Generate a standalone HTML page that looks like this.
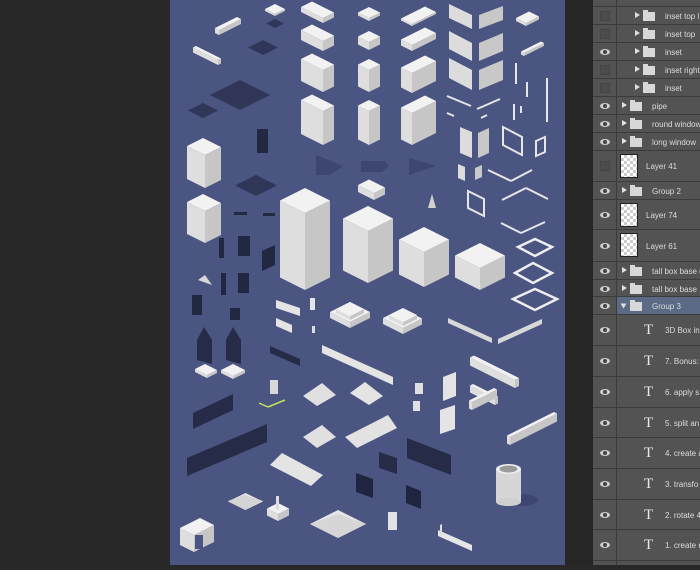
<!DOCTYPE html>
<html><head><meta charset="utf-8"><style>
*{margin:0;padding:0;box-sizing:border-box}
body{width:700px;height:565px;overflow:hidden;background:#282828;position:relative;font-family:"Liberation Sans",sans-serif}
#left{position:absolute;left:0;top:0;width:170px;height:565px;background:#282828}
#cv{position:absolute;left:170px;top:0;width:395px;height:565px;background:#4a5582}
#strip{position:absolute;left:565px;top:0;width:28px;height:565px;background:#262626}
#panel{position:absolute;left:593px;top:0;width:107px;height:565px;background:#535353;overflow:hidden}
.row{position:absolute;left:0;width:107px;border-bottom:1px solid #3b3b3b;color:#dcdcdc;font-size:8px;white-space:nowrap}
.row .eyec{position:absolute;left:0;top:0;bottom:0;width:24px;border-right:1px solid #3b3b3b}
.eye{position:absolute;left:7px;width:10px;height:6px;border-radius:50%;background:#cfcfcf}
.eye:after{content:"";position:absolute;left:3px;top:1px;width:4px;height:4px;border-radius:50%;background:#444}
.box{position:absolute;left:7px;width:10px;height:10px;border:1px solid #444;background:#4c4c4c}
.tri{position:absolute;width:0;height:0;border-left:5px solid #e0e0e0;border-top:3.5px solid transparent;border-bottom:3.5px solid transparent}
.fold{position:absolute;width:12px;height:9px;background:#d8d8d8}
.fold:before{content:"";position:absolute;left:0;top:-2px;width:5px;height:2px;background:#d8d8d8}
.thumb{position:absolute;left:27px;width:18px;height:24px;border:1px solid #222;background-color:#fff;background-image:linear-gradient(45deg,#ccc 25%,transparent 25%,transparent 75%,#ccc 75%),linear-gradient(45deg,#ccc 25%,transparent 25%,transparent 75%,#ccc 75%);background-size:6px 6px;background-position:0 0,3px 3px}
.T{position:absolute;left:51px;font-family:"Liberation Serif",serif;font-size:15px;color:#e8e8e8}
.lbl{position:absolute}
</style></head><body>
<div id="left"></div>
<div id="cv"><svg id="s" width="395" height="565" viewBox="170 0 395 565" xmlns="http://www.w3.org/2000/svg"></svg></div>
<div id="strip"></div>
<div id="panel">
<div class="row" style="top:0;height:7px;"><div class="eyec"></div></div>
<div class="row" style="top:7px;height:18px"><div class="eyec"><div class="box" style="top:4px"></div></div><div class="tri" style="left:42px;top:5px"></div><div class="fold" style="left:50px;top:5px"></div><div class="lbl" style="left:72px;top:5px">inset top l</div></div>
<div class="row" style="top:25px;height:18px"><div class="eyec"><div class="box" style="top:4px"></div></div><div class="tri" style="left:42px;top:5px"></div><div class="fold" style="left:50px;top:5px"></div><div class="lbl" style="left:72px;top:5px">inset top</div></div>
<div class="row" style="top:43px;height:18px"><div class="eyec"><div class="eye" style="top:6px"></div></div><div class="tri" style="left:42px;top:5px"></div><div class="fold" style="left:50px;top:5px"></div><div class="lbl" style="left:72px;top:5px">inset</div></div>
<div class="row" style="top:61px;height:18px"><div class="eyec"><div class="box" style="top:4px"></div></div><div class="tri" style="left:42px;top:5px"></div><div class="fold" style="left:50px;top:5px"></div><div class="lbl" style="left:72px;top:5px">inset right</div></div>
<div class="row" style="top:79px;height:18px"><div class="eyec"><div class="box" style="top:4px"></div></div><div class="tri" style="left:42px;top:5px"></div><div class="fold" style="left:50px;top:5px"></div><div class="lbl" style="left:72px;top:5px">inset</div></div>
<div class="row" style="top:97px;height:18px"><div class="eyec"><div class="eye" style="top:6px"></div></div><div class="tri" style="left:29px;top:5px"></div><div class="fold" style="left:37px;top:5px"></div><div class="lbl" style="left:59px;top:5px">pipe</div></div>
<div class="row" style="top:115px;height:18px"><div class="eyec"><div class="eye" style="top:6px"></div></div><div class="tri" style="left:29px;top:5px"></div><div class="fold" style="left:37px;top:5px"></div><div class="lbl" style="left:59px;top:5px">round window</div></div>
<div class="row" style="top:133px;height:18px"><div class="eyec"><div class="eye" style="top:6px"></div></div><div class="tri" style="left:29px;top:5px"></div><div class="fold" style="left:37px;top:5px"></div><div class="lbl" style="left:59px;top:5px">long window</div></div>
<div class="row" style="top:151px;height:31px"><div class="eyec"><div class="box" style="top:10px"></div></div><div class="thumb" style="top:3px"></div><div class="lbl" style="left:53px;top:11px">Layer 41</div></div>
<div class="row" style="top:182px;height:18px"><div class="eyec"><div class="eye" style="top:6px"></div></div><div class="tri" style="left:29px;top:5px"></div><div class="fold" style="left:37px;top:5px"></div><div class="lbl" style="left:59px;top:5px">Group 2</div></div>
<div class="row" style="top:200px;height:30px"><div class="eyec"><div class="eye" style="top:12px"></div></div><div class="thumb" style="top:3px"></div><div class="lbl" style="left:53px;top:11px">Layer 74</div></div>
<div class="row" style="top:230px;height:32px"><div class="eyec"><div class="eye" style="top:13px"></div></div><div class="thumb" style="top:3px"></div><div class="lbl" style="left:53px;top:12px">Layer 61</div></div>
<div class="row" style="top:262px;height:18px"><div class="eyec"><div class="eye" style="top:6px"></div></div><div class="tri" style="left:29px;top:5px"></div><div class="fold" style="left:37px;top:5px"></div><div class="lbl" style="left:59px;top:5px">tall box base c</div></div>
<div class="row" style="top:280px;height:17px"><div class="eyec"><div class="eye" style="top:6px"></div></div><div class="tri" style="left:29px;top:5px"></div><div class="fold" style="left:37px;top:5px"></div><div class="lbl" style="left:59px;top:5px">tall box base</div></div>
<div class="row" style="top:297px;height:18px;background:#5b6a85"><div class="eyec" style="background:#535353"><div class="eye" style="top:6px"></div></div><div class="tri" style="left:28px;top:6px;transform:rotate(90deg)"></div><div class="fold" style="left:37px;top:5px"></div><div class="lbl" style="left:59px;top:5px">Group 3</div></div>
<div class="row" style="top:315px;height:31px"><div class="eyec"><div class="eye" style="top:12px"></div></div><div class="T" style="top:7px">T</div><div class="lbl" style="left:72px;top:11px">3D Box in</div></div>
<div class="row" style="top:346px;height:31px"><div class="eyec"><div class="eye" style="top:12px"></div></div><div class="T" style="top:7px">T</div><div class="lbl" style="left:72px;top:11px">7. Bonus:</div></div>
<div class="row" style="top:377px;height:31px"><div class="eyec"><div class="eye" style="top:12px"></div></div><div class="T" style="top:7px">T</div><div class="lbl" style="left:72px;top:11px">6. apply s</div></div>
<div class="row" style="top:408px;height:30px"><div class="eyec"><div class="eye" style="top:12px"></div></div><div class="T" style="top:7px">T</div><div class="lbl" style="left:72px;top:11px">5. split an</div></div>
<div class="row" style="top:438px;height:31px"><div class="eyec"><div class="eye" style="top:12px"></div></div><div class="T" style="top:7px">T</div><div class="lbl" style="left:72px;top:11px">4. create a</div></div>
<div class="row" style="top:469px;height:31px"><div class="eyec"><div class="eye" style="top:12px"></div></div><div class="T" style="top:7px">T</div><div class="lbl" style="left:72px;top:11px">3. transfo</div></div>
<div class="row" style="top:500px;height:30px"><div class="eyec"><div class="eye" style="top:12px"></div></div><div class="T" style="top:7px">T</div><div class="lbl" style="left:72px;top:11px">2. rotate 4</div></div>
<div class="row" style="top:530px;height:31px"><div class="eyec"><div class="eye" style="top:12px"></div></div><div class="T" style="top:7px">T</div><div class="lbl" style="left:72px;top:11px">1. create r</div></div>
<div class="row" style="top:561px;height:10px"><div class="eyec"></div></div>
</div>
<script>
var o=[];
function P(pts,c){o.push('<polygon points="'+pts.map(function(p){return p[0]+','+p[1]}).join(' ')+'" fill="'+c+'"/>');}
function B(fx,fy,a,b,h){
 var L=[fx-a,fy-a/2],R=[fx+b,fy-b/2],K=[fx+b-a,fy-(a+b)/2],F=[fx,fy];
 P([L,F,[fx,fy+h],[L[0],L[1]+h]],'#dedede');
 P([F,R,[R[0],R[1]+h],[fx,fy+h]],'#c6c6c6');
 P([L,K,R,F],'#f2f2f2');
}
function D(x,y,w,hh,c){P([[x,y+hh/2],[x+w/2,y],[x+w,y+hh/2],[x+w/2,y+hh]],c||'#2f3658');}
function Rc(x,y,w,h,c){o.push('<rect x="'+x+'" y="'+y+'" width="'+w+'" height="'+h+'" fill="'+c+'"/>');}
function Ln(x1,y1,x2,y2,w,c){o.push('<line x1="'+x1+'" y1="'+y1+'" x2="'+x2+'" y2="'+y2+'" stroke="'+(c||'#e6e6e6')+'" stroke-width="'+(w||2)+'"/>');}
// shadows
P([[316,155],[343,166],[330,175],[316,175]],'#3d4672');
P([[361,161],[385,161],[389,166],[382,172],[361,172]],'#3d4672');
P([[409,158],[436,166],[409,175]],'#3d4672');
// holes
D(266,19,18,9);D(248,40,30,15);D(210,80,60,30);D(188,103,30,15);D(235,175,42,21);
// small bars/slabs top-left
B(219,30,4,22,5);B(218,60,25,3,5);B(275,14,10,10,2);
// column 1
B(323,18,22,11,5);B(323,41,22,11,10);B(323,70,22,11,22);B(323,111,22,11,34);
// column 2
B(369,18,11,11,3);B(369,42,11,11,8);B(369,70,11,11,22);B(369,111,11,11,34);
// column 3
B(412,24,11,24,2);B(412,45,11,24,6);B(412,73,11,24,20);B(412,113,11,24,32);
// left boxes
B(205,155,18,16,33);B(205,211,18,16,32);
// big boxes
B(305,213,25,25,77);B(368,231,25,25,52);B(424,252,25,25,35);B(480,268,25,25,22);
// small slab & cone
B(374,193,16,11,7);
P([[428,208],[432,194],[436,208]],'#d0d0d0');
// walls
function W(x1,y1,x2,y2,h,c){P([[x1,y1],[x2,y2],[x2,y2+h],[x1,y1+h]],c);}
W(449,4,472,15,14,'#dcdcdc');W(479,15,503,6,14,'#c8c8c8');
W(449,31,472,43,18,'#dcdcdc');W(479,43,503,33,18,'#c8c8c8');
W(449,58,472,70,20,'#dcdcdc');W(479,70,503,60,20,'#c8c8c8');
B(526,23,10,13,3);B(524,53,3,20,3);
Ln(516,63,516,84);Ln(527,82,527,97);Ln(547,78,547,122);Ln(514,104,514,120);Ln(521,106,521,113);
Ln(447,96,471,106);Ln(477,109,500,99);Ln(447,113,454,116);Ln(481,118,487,115);
W(460,127,472,132,26,'#dcdcdc');W(478,133,489,128,25,'#c8c8c8');
W(458,164,465,167,14,'#dcdcdc');W(475,168,482,165,12,'#c8c8c8');
o.push('<polygon points="503,127 522,137 522,155 503,145" fill="none" stroke="#e6e6e6" stroke-width="2"/>');
o.push('<polygon points="536,141 545,137 545,152 536,156" fill="none" stroke="#e6e6e6" stroke-width="2"/>');
o.push('<polygon points="468,191 484,199 484,216 468,208" fill="none" stroke="#e6e6e6" stroke-width="2"/>');
Ln(488,170,511,181);Ln(511,181,532,170);Ln(502,200,526,188);Ln(526,188,548,199);
Ln(501,223,521,233);Ln(521,233,545,222);
D(518,238,34,18,'none');o.push('<polygon points="518,247 535,239 552,247 535,256" fill="none" stroke="#eee" stroke-width="2.5"/>');
o.push('<polygon points="515,273 533,263 552,273 533,283" fill="none" stroke="#eee" stroke-width="2.5"/>');
o.push('<polygon points="513,299 535,289 557,299 535,310" fill="none" stroke="#eee" stroke-width="2.5"/>');
// dark windows
Rc(257,129,11,24,'#222841');Rc(234,212,13,3,'#222841');Rc(263,213,12,3,'#222841');
Rc(219,238,5,20,'#222841');Rc(238,236,12,20,'#222841');W(262,251,275,245,20,'#222841');
Rc(221,273,5,22,'#222841');Rc(238,273,11,20,'#222841');Rc(192,295,10,20,'#222841');Rc(230,308,10,12,'#222841');
P([[197,340],[204,327],[212,340],[212,364],[197,360]],'#262c47');
P([[226,340],[233,327],[241,340],[241,364],[226,360]],'#262c47');
P([[198,280],[205,275],[212,285]],'#d8d8d8');
B(207,375,12,10,3);B(233,376,12,12,3);
W(193,413,233,394,16,'#262c47');W(187,458,267,424,18,'#262c47');
// shelves/frames
W(276,300,300,308,8,'#e4e4e4');W(276,318,292,325,8,'#e4e4e4');
W(270,346,300,359,7,'#262c47');
W(322,345,393,377,8,'#e4e4e4');
Rc(310,298,5,12,'#e4e4e4');Rc(312,326,3,7,'#ddd');
// stairs
B(350,322,20,20,6);B(350,316,14,14,4);B(403,328,20,19,6);B(403,322,14,14,4);
// fence
W(448,318,492,338,5,'#d8d8d8');W(498,339,542,319,5,'#d8d8d8');
// roofs
function Rf(x1,y1,x2,y2,x3,y3,x4,y4){P([[x1,y1],[x2,y2],[x3,y3],[x4,y4]],'#e2e2e2');}
P([[303,396],[322,383],[336,395],[317,406]],'#e0e0e0');
P([[350,393],[365,382],[383,396],[369,405]],'#e4e4e4');
P([[303,437],[322,425],[336,437],[317,448]],'#e0e0e0');
P([[345,437],[388,415],[397,428],[357,448]],'#e2e2e2');
P([[270,465],[282,453],[323,475],[311,486]],'#e4e4e4');
// right blocks
B(515,380,45,4,8);B(495,398,25,3,7);B(472,402,3,25,8);B(510,437,3,47,8);
Rc(415,383,8,11,'#e0e0e0');Rc(413,401,7,10,'#e0e0e0');
W(443,377,456,372,24,'#e4e4e4');W(440,410,455,405,24,'#e4e4e4');
Rc(270,380,8,14,'#d8d8d8');
Ln(259,403,268,407,1.5,'#c8e05a');Ln(268,407,285,400,1.5,'#c8e05a');
// dark windows lower
W(379,452,397,458,16,'#262c47');W(356,473,373,479,19,'#1f2440');W(406,485,421,491,18,'#1f2440');
W(407,438,451,455,20,'#262c47');
// cylinder
Rc(496,469,25,33,'#d4d4d4');o.push('<ellipse cx="522" cy="500" rx="16" ry="6" fill="#3d4672"/>');
Rc(496,469,25,33,'#d6d6d6');o.push('<ellipse cx="508.5" cy="502" rx="12.5" ry="4" fill="#d0d0d0"/><ellipse cx="508.5" cy="469" rx="12.5" ry="5" fill="#eee"/><ellipse cx="508.5" cy="469" rx="9" ry="3.5" fill="#9a9a9a"/>');
// pyramids
D(228,493,35,17,'#e6e6e6');P([[228,501],[245,510],[263,501],[245,495]],'#d4d4d4');
D(310,510,56,28,'#e6e6e6');P([[310,524],[338,538],[366,524],[338,514]],'#d6d6d6');
B(278,514,11,11,7);Rc(276,496,3,14,'#ddd');
// desk
B(194,535,14,20,17);Rc(195,535,8,14,'#4a5582');
Rc(388,512,9,18,'#e2e2e2');
W(438,530,472,545,6,'#e6e6e6');W(440,525,442,524,10,'#ddd');
document.getElementById('s').innerHTML=o.join('');
</script>
</body></html>
